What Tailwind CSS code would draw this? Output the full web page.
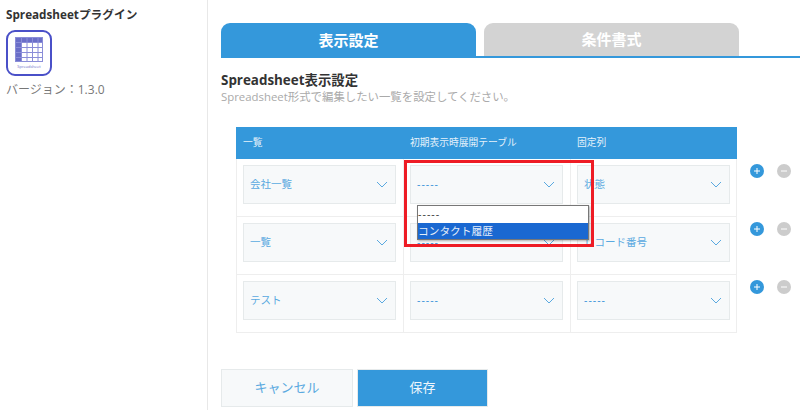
<!doctype html>
<html>
<head>
  <meta charset="UTF-8">
  <script src="https://cdn.jsdelivr.net/npm/@tailwindcss/browser@4"></script>
</head>
<body class="bg-white text-[#333] font-['Open_Sans','Noto_Sans_CJK_JP',sans-serif] w-[800px] h-[410px] overflow-hidden">
<div class="flex h-[410px]">
  <!-- side -->
  <aside class="w-[208px] h-full border-r border-[#e8e8e8] pl-[6px] pt-[6px] shrink-0">
    <div class="text-[11.7px] leading-[16px] font-bold text-[#333]">Spreadsheetプラグイン</div>
    <div class="mt-[8px] w-[46px] h-[46px] rounded-[9px] border-2 border-[#4a50c8] flex flex-col items-center pt-[5px]">
      <svg width="28" height="25" viewBox="0 0 28 25">
        <rect width="28" height="25" fill="#fff"/>
        <path d="M0 0H28V5H0ZM0 5H6V25H0Z" fill="#6a6ec8"/>
        <path d="M0 .5H28M0 5.5H28M0 10.5H28M0 15.5H28M0 20.5H28M0 24.5H28M.5 0V25M6.5 0V25M12 0V25M17.5 0V25M23 0V25M27.5 0V25" stroke="#8a8dd8" stroke-width="1" fill="none"/>
      </svg>
      <span class="text-[4px] leading-[6px] mt-[2px] text-[#6a6ec8]">Spreadsheet</span>
    </div>
    <div class="mt-[5px] text-[12px] leading-[18px] text-[#777]">バージョン：1.3.0</div>
  </aside>

  <main class="flex-1 pt-[23px]">
    <!-- tabs -->
    <div class="ml-[13px] flex gap-[8px] border-b-2 border-[#3498db] h-[35px]">
      <div class="w-[255px] h-[35px] rounded-t-[9px] bg-[#3498db] text-white font-bold text-[15px] flex items-center justify-center">表示設定</div>
      <div class="w-[255px] h-[33px] rounded-t-[9px] bg-[#d3d3d3] text-white font-bold text-[15px] flex items-center justify-center">条件書式</div>
    </div>

    <div class="ml-[13px] mt-[13px] text-[13.4px] leading-[18px] font-bold text-[#333]">Spreadsheet表示設定</div>
    <div class="ml-[13px] text-[11.4px] leading-[15px] text-[#aaa]">Spreadsheet形式で編集したい一覧を設定してください。</div>

    <!-- table + row buttons -->
    <div class="relative ml-[28px] mt-[23px] w-[564px]">
      <div class="w-[501px] border-x border-b border-[#eee]">
        <div class="grid grid-cols-[167px_167px_165px] h-[32px] -mx-px w-[501px] bg-[#3498db] text-[#e4f1fa] text-[9.75px] items-center">
          <div class="pl-[7px]">一覧</div>
          <div class="pl-[7px]">初期表示時展開テーブル</div>
          <div class="pl-[7px]">固定列</div>
        </div>
        <div class="grid grid-cols-[167px_167px_165px] h-[58px] border-b border-[#eee]">
          <div class="border-r border-[#eee] pl-[6px] pt-[6px]"><div class="flex items-center justify-between w-[153px] h-[39px] bg-[#f7f9fa] border border-[#e6eaeb] pl-[6px] pr-[7px] text-[10.5px] text-[#5aa9e0]"><span>会社一覧</span><svg width="12" height="7" viewBox="0 0 12 7" fill="none" stroke="#5aa9e0"><path d="M1 1l5 5 5-5"/></svg></div></div>
          <div class="border-r border-[#eee] pl-[6px] pt-[6px]"><div class="flex items-center justify-between w-[153px] h-[39px] bg-[#f7f9fa] border border-[#e6eaeb] pl-[6px] pr-[7px] text-[10.5px] text-[#2f8fd8]"><span class="tracking-[1px]">-----</span><svg width="12" height="7" viewBox="0 0 12 7" fill="none" stroke="#5aa9e0"><path d="M1 1l5 5 5-5"/></svg></div></div>
          <div class="pl-[6px] pt-[6px]"><div class="flex items-center justify-between w-[153px] h-[39px] bg-[#f7f9fa] border border-[#e6eaeb] pl-[6px] pr-[7px] text-[10.5px] text-[#5aa9e0]"><span>状態</span><svg width="12" height="7" viewBox="0 0 12 7" fill="none" stroke="#5aa9e0"><path d="M1 1l5 5 5-5"/></svg></div></div>
        </div>
        <div class="grid grid-cols-[167px_167px_165px] h-[58px] border-b border-[#eee]">
          <div class="border-r border-[#eee] pl-[6px] pt-[6px]"><div class="flex items-center justify-between w-[153px] h-[39px] bg-[#f7f9fa] border border-[#e6eaeb] pl-[6px] pr-[7px] text-[10.5px] text-[#5aa9e0]"><span>一覧</span><svg width="12" height="7" viewBox="0 0 12 7" fill="none" stroke="#5aa9e0"><path d="M1 1l5 5 5-5"/></svg></div></div>
          <div class="border-r border-[#eee] pl-[6px] pt-[6px]"><div class="flex items-center justify-between w-[153px] h-[39px] bg-[#f7f9fa] border border-[#e6eaeb] pl-[6px] pr-[7px] text-[10.5px] text-[#2f8fd8]"><span class="tracking-[1px]">-----</span><svg width="12" height="7" viewBox="0 0 12 7" fill="none" stroke="#5aa9e0"><path d="M1 1l5 5 5-5"/></svg></div></div>
          <div class="pl-[6px] pt-[6px]"><div class="flex items-center justify-between w-[153px] h-[39px] bg-[#f7f9fa] border border-[#e6eaeb] pl-[6px] pr-[7px] text-[10.5px] text-[#5aa9e0]"><span>レコード番号</span><svg width="12" height="7" viewBox="0 0 12 7" fill="none" stroke="#5aa9e0"><path d="M1 1l5 5 5-5"/></svg></div></div>
        </div>
        <div class="grid grid-cols-[167px_167px_165px] h-[57px]">
          <div class="border-r border-[#eee] pl-[6px] pt-[6px]"><div class="flex items-center justify-between w-[153px] h-[39px] bg-[#f7f9fa] border border-[#e6eaeb] pl-[6px] pr-[7px] text-[10.5px] text-[#5aa9e0]"><span>テスト</span><svg width="12" height="7" viewBox="0 0 12 7" fill="none" stroke="#5aa9e0"><path d="M1 1l5 5 5-5"/></svg></div></div>
          <div class="border-r border-[#eee] pl-[6px] pt-[6px]"><div class="flex items-center justify-between w-[153px] h-[39px] bg-[#f7f9fa] border border-[#e6eaeb] pl-[6px] pr-[7px] text-[10.5px] text-[#2f8fd8]"><span class="tracking-[1px]">-----</span><svg width="12" height="7" viewBox="0 0 12 7" fill="none" stroke="#5aa9e0"><path d="M1 1l5 5 5-5"/></svg></div></div>
          <div class="pl-[6px] pt-[6px]"><div class="flex items-center justify-between w-[153px] h-[39px] bg-[#f7f9fa] border border-[#e6eaeb] pl-[6px] pr-[7px] text-[10.5px] text-[#2f8fd8]"><span class="tracking-[1px]">-----</span><svg width="12" height="7" viewBox="0 0 12 7" fill="none" stroke="#5aa9e0"><path d="M1 1l5 5 5-5"/></svg></div></div>
        </div>
      </div>

      <!-- row add / remove -->
      <div class="absolute left-[514px] top-[37px] flex flex-col gap-[44px]">
        <div class="flex gap-[13px]"><div class="w-[14px] h-[14px] rounded-full bg-[#3498db] flex items-center justify-center"><svg width="8" height="8" viewBox="0 0 8 8" stroke="#fff"><path d="M4 1v6M1 4h6"/></svg></div><div class="w-[14px] h-[14px] rounded-full bg-[#ccc] flex items-center justify-center"><svg width="8" height="8" viewBox="0 0 8 8" stroke="#fff"><path d="M1 4h6"/></svg></div></div>
        <div class="flex gap-[13px]"><div class="w-[14px] h-[14px] rounded-full bg-[#3498db] flex items-center justify-center"><svg width="8" height="8" viewBox="0 0 8 8" stroke="#fff"><path d="M4 1v6M1 4h6"/></svg></div><div class="w-[14px] h-[14px] rounded-full bg-[#ccc] flex items-center justify-center"><svg width="8" height="8" viewBox="0 0 8 8" stroke="#fff"><path d="M1 4h6"/></svg></div></div>
        <div class="flex gap-[13px]"><div class="w-[14px] h-[14px] rounded-full bg-[#3498db] flex items-center justify-center"><svg width="8" height="8" viewBox="0 0 8 8" stroke="#fff"><path d="M4 1v6M1 4h6"/></svg></div><div class="w-[14px] h-[14px] rounded-full bg-[#ccc] flex items-center justify-center"><svg width="8" height="8" viewBox="0 0 8 8" stroke="#fff"><path d="M1 4h6"/></svg></div></div>
      </div>

      <!-- open dropdown -->
      <div class="absolute left-[181px] top-[78px] w-[172px] h-[35px] bg-white border border-[#777] shadow-[1px_1px_2px_rgba(0,0,0,0.3)] text-[10.7px] leading-[16px] text-[#333]">
        <div class="h-[17px] tracking-[1px]">-----</div>
        <div class="h-[16px] bg-[#1a68d1] text-[#e4eefa]">コンタクト履歴</div>
      </div>
      <!-- red annotation -->
      <div class="absolute left-[168px] top-[33px] w-[190px] h-[87px] border-[3px] border-[#ee1c25] pointer-events-none"></div>
    </div>

    <!-- buttons -->
    <div class="ml-[13px] mt-[36px] flex gap-[4px]">
      <div class="w-[132px] h-[38px] bg-[#f7f9fa] border border-[#e6eaeb] text-[#5aa9e0] text-[13px] flex items-center justify-center">キャンセル</div>
      <div class="w-[131px] h-[38px] bg-[#3498db] border border-[#e6eaeb] text-[#eef6fc] text-[13px] flex items-center justify-center">保存</div>
    </div>
  </main>
</div>
</body>
</html>
